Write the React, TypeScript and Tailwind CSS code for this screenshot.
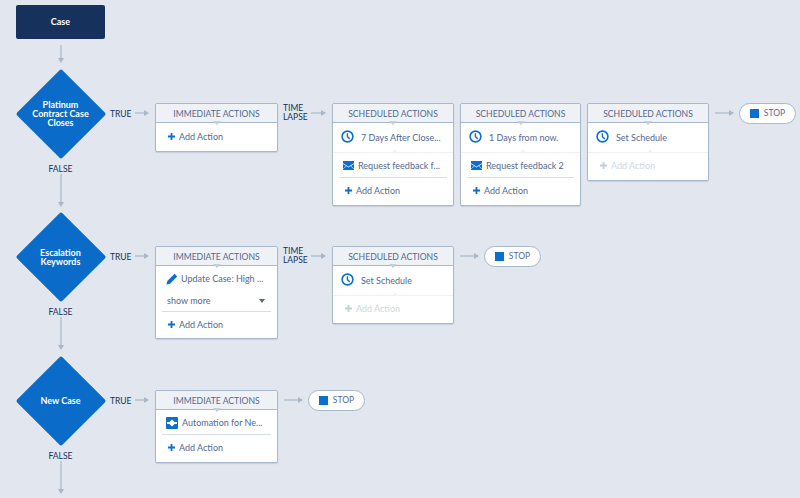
import React from 'react';

const HArrow = ({ w }: { w: number }) => (
  <svg width={w} height="8" viewBox={`0 0 ${w} 8`} className="shrink-0">
    <line x1="0" y1="4" x2={w - 2} y2="4" stroke="#a9b8c9" strokeWidth="1.2" />
    <path d={`M${w - 5} 1 L${w} 4 L${w - 5} 7 Z`} fill="#a9b8c9" />
  </svg>
);

const VArrow = ({ h }: { h: number }) => (
  <svg width="8" height={h} viewBox={`0 0 8 ${h}`} className="block shrink-0">
    <line x1="4" y1="0" x2="4" y2={h - 2} stroke="#a9b8c9" strokeWidth="1.2" />
    <path d={`M1 ${h - 5} L4 ${h} L7 ${h - 5} Z`} fill="#a9b8c9" />
  </svg>
);

const Clock = () => (
  <svg width="13" height="13" viewBox="0 0 13 13" className="shrink-0">
    <circle cx="6.5" cy="6.5" r="5.4" fill="none" stroke="#0b6fcf" strokeWidth="1.6" />
    <path d="M6.4 3.2 V6.8 L8.8 8.9" fill="none" stroke="#0b6fcf" strokeWidth="1.4" />
  </svg>
);

const Mail = () => (
  <svg width="11" height="9" viewBox="0 0 11 9" className="shrink-0">
    <rect width="11" height="9" fill="#0b6fcf" />
    <path d="M0 2.6 L5.5 6 L11 2.6" fill="none" stroke="#fff" strokeWidth="0.8" />
    <path d="M0 8 L3.5 4.6 M11 8 L7.5 4.6" fill="none" stroke="#fff" strokeWidth="0.6" />
  </svg>
);

const Pencil = () => (
  <svg width="12" height="12" viewBox="0 0 12 12" className="shrink-0">
    <path d="M0.5 11.5 L1.3 8 L8.6 0.8 L11.2 3.4 L4 10.7 Z" fill="#0b6fcf" />
  </svg>
);

const Flow = () => (
  <svg width="12" height="12" viewBox="0 0 12 12" className="shrink-0">
    <rect width="12" height="12" rx="1" fill="#0b6fcf" />
    <rect x="1" y="5" width="10" height="2" fill="#fff" />
    <path d="M6 2.4 L9.6 6 L6 9.6 L2.4 6 Z" fill="#fff" />
  </svg>
);

const Plus = ({ faded }: { faded?: boolean }) => (
  <svg width="7" height="7" viewBox="0 0 7 7" className="shrink-0">
    <path d="M3.5 0 V7 M0 3.5 H7" stroke={faded ? '#c3cedb' : '#0b6fcf'} strokeWidth="1.8" />
  </svg>
);

const AddAction = ({ faded, className }: { faded?: boolean; className: string }) => (
  <div className={`flex h-[12px] items-center gap-[4px] pl-[12px] ${className}`}>
    <Plus faded={faded} />
    <span className={`pt-[1px] ${faded ? 'text-[#ced7e2]' : 'text-[#54698d]'}`}>Add Action</span>
  </div>
);

const Card = ({ title, width, height, children }: { title: string; width: string; height: string; children: React.ReactNode }) => (
  <div className={`${width} ${height} shrink-0 rounded-[2px] border-[1.5px] border-[#a9b8cb] bg-white shadow-[0_1px_1px_rgba(120,140,170,0.25)] flex flex-col`}>
    <div className="relative h-[19px] shrink-0 border-b border-[#a9b8cb] bg-[#eef1f6] pt-[2px] flex items-center justify-center text-[8.6px] text-[#54698d]">
      {title}
      <span className="absolute left-1/2 top-full -ml-[4px] -mt-[1px] h-0 w-0 border-x-[4px] border-t-[4px] border-x-transparent border-t-[#c4cfdc]" />
    </div>
    {children}
  </div>
);

const Row = ({ icon, text, className }: { icon: React.ReactNode; text: string; className: string }) => (
  <div className={`flex items-center whitespace-nowrap text-[#54698d] ${className}`}>
    {icon}
    <span>{text}</span>
  </div>
);

const ScheduleRow = ({ text }: { text: string }) => (
  <div className="mt-[7px] flex h-[13px] items-center gap-[7px] whitespace-nowrap pl-[8px] text-[#54698d]">
    <Clock />
    <span className="pt-[2px]">{text}</span>
  </div>
);

const Separator = () => <div className="mx-[6px] h-px bg-[#d8dde6]" />;

const FaintSeparator = () => (
  <div className="relative mt-[9px] h-px bg-[#eef1f6]">
    <span className="absolute left-1/2 top-[-3px] h-[3px] w-[3px] -rotate-45 border-b border-[#dfe4ec]" />
  </div>
);

const Stop = () => (
  <div className="flex h-[21px] w-[57px] shrink-0 items-center justify-center gap-[5px] rounded-full border-[1.5px] border-[#a9b8cb] bg-white text-[8.5px] text-[#54698d]">
    <span className="h-[9px] w-[9px] bg-[#0b6fcf]" />
    STOP
  </div>
);

const Diamond = ({ lines }: { lines: string[] }) => (
  <div className="relative flex h-[89px] w-[89px] shrink-0 items-center justify-center">
    <div className="absolute left-[12.5px] top-[12.5px] h-[64px] w-[64px] rotate-45 rounded-[2px] bg-[#0b6bc9]" />
    <div className="relative text-center font-bold leading-[9px] text-white">
      {lines.map(line => (
        <div key={line} className="whitespace-nowrap">{line}</div>
      ))}
    </div>
  </div>
);

const Label = ({ children, className }: { children: React.ReactNode; className: string }) => (
  <div className={`text-[8.5px] text-[#16325c] ${className}`}>{children}</div>
);

const TrueArrow = () => (
  <div className="flex h-[20px] w-[50px] shrink-0 items-center">
    <Label className="ml-[5px] w-[25px] pt-[2px]">TRUE</Label>
    <HArrow w={14} />
  </div>
);

const TimeLapse = () => (
  <div className="flex h-[20px] w-[54px] shrink-0 items-center">
    <Label className="ml-[5px] w-[28px] leading-[9px]">TIME LAPSE</Label>
    <HArrow w={15} />
  </div>
);

const False = ({ arrow }: { arrow: number }) => (
  <div className="flex w-[89px] flex-col items-center">
    <Label className="mt-[5px] h-[10px] pt-[1px] leading-[10px]">FALSE</Label>
    <div className="mt-[1px]"><VArrow h={arrow} /></div>
  </div>
);

const StopArrow = () => (
  <div className="flex h-[20px] items-center pl-[6px] pr-[5px]"><HArrow w={19} /></div>
);

const App: React.FC = () => {
  return (
    <div className="h-[498px] w-[800px] overflow-hidden bg-[#e1e6ef] pl-[16px] pt-[5px] font-['Lato',sans-serif] text-[9px]">
      <div className="flex h-[34px] w-[89px] items-center justify-center rounded-[2px] bg-[#16325c] font-bold text-white">
        Case
      </div>
      <div className="flex w-[89px] justify-center pt-[6px] pb-[6px]"><VArrow h={18} /></div>

      <div className="flex h-[89px] items-start">
        <Diamond lines={['Platinum', 'Contract Case', 'Closes']} />
        <div className="mt-[34px] flex items-start">
          <TrueArrow />
          <Card title="IMMEDIATE ACTIONS" width="w-[123px]" height="h-[49px]">
            <AddAction className="mt-[7px]" />
          </Card>
          <TimeLapse />
          <Card title="SCHEDULED ACTIONS" width="w-[122px]" height="h-[103px]">
            <ScheduleRow text="7 Days After Close..." />
            <FaintSeparator />
            <Row icon={<Mail />} text="Request feedback f..." className="mt-[7px] h-[11px] gap-[4px] pl-[10px]" />
            <div className="mt-[6px]"><Separator /></div>
            <AddAction className="mt-[6px]" />
          </Card>
          <div className="w-[6px]" />
          <Card title="SCHEDULED ACTIONS" width="w-[121px]" height="h-[103px]">
            <ScheduleRow text="1 Days from now." />
            <FaintSeparator />
            <Row icon={<Mail />} text="Request feedback 2" className="mt-[7px] h-[11px] gap-[4px] pl-[10px]" />
            <div className="mt-[6px]"><Separator /></div>
            <AddAction className="mt-[6px]" />
          </Card>
          <div className="w-[6px]" />
          <Card title="SCHEDULED ACTIONS" width="w-[122px]" height="h-[78px]">
            <ScheduleRow text="Set Schedule" />
            <FaintSeparator />
            <AddAction faded className="mt-[6px]" />
          </Card>
          <StopArrow />
          <Stop />
        </div>
      </div>
      <False arrow={33} />

      <div className="mt-[5px] flex h-[89px] items-start">
        <Diamond lines={['Escalation', 'Keywords']} />
        <div className="mt-[34px] flex items-start">
          <TrueArrow />
          <Card title="IMMEDIATE ACTIONS" width="w-[123px]" height="h-[93px]">
            <Row icon={<Pencil />} text="Update Case: High ..." className="mt-[6px] h-[13px] gap-[3px] pl-[10px] pt-[1px]" />
            <div className="mt-[10px] flex h-[11px] items-center justify-between pl-[11px] pr-[12px] text-[#54698d]">
              show more
              <span className="h-0 w-0 border-x-[3.5px] border-t-[4px] border-x-transparent border-t-[#54698d]" />
            </div>
            <div className="mt-[5px]"><Separator /></div>
            <AddAction className="mt-[6px]" />
          </Card>
          <TimeLapse />
          <Card title="SCHEDULED ACTIONS" width="w-[122px]" height="h-[78px]">
            <ScheduleRow text="Set Schedule" />
            <FaintSeparator />
            <AddAction faded className="mt-[6px]" />
          </Card>
          <StopArrow />
          <Stop />
        </div>
      </div>
      <False arrow={33} />

      <div className="mt-[6px] flex h-[89px] items-start">
        <Diamond lines={['New Case']} />
        <div className="mt-[34px] flex items-start">
          <TrueArrow />
          <Card title="IMMEDIATE ACTIONS" width="w-[123px]" height="h-[73px]">
            <Row icon={<Flow />} text="Automation for Ne..." className="mt-[6px] h-[13px] gap-[4px] pl-[10px]" />
            <div className="mt-[5px]"><Separator /></div>
            <AddAction className="mt-[6px]" />
          </Card>
          <StopArrow />
          <Stop />
        </div>
      </div>
      <False arrow={33} />
    </div>
  );
};

export default App;
